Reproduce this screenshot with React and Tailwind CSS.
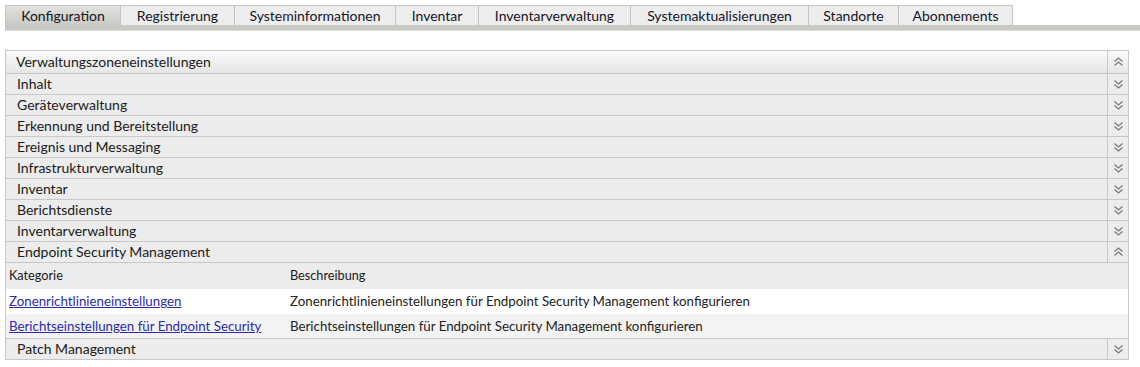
import React from "react";

const font = { fontFamily: "Lato, 'Noto Sans', sans-serif" };

function Chevrons({ up }) {
  return (
    <svg width="11" height="10" viewBox="0 0 11 10" className="block">
      <g fill="none" stroke="#7a7a7a" strokeWidth="1.3">
        {up ? (
          <>
            <path d="M1.5 4.5 L5.5 1 L9.5 4.5" />
            <path d="M1.5 8.5 L5.5 5 L9.5 8.5" />
          </>
        ) : (
          <>
            <path d="M1.5 1.5 L5.5 5 L9.5 1.5" />
            <path d="M1.5 5.5 L5.5 9 L9.5 5.5" />
          </>
        )}
      </g>
    </svg>
  );
}

const tabs = [
  ["Konfiguration", "w-[115px]", true],
  ["Registrierung", "w-[114px]"],
  ["Systeminformationen", "w-[161px]"],
  ["Inventar", "w-[83px]"],
  ["Inventarverwaltung", "w-[152px]"],
  ["Systemaktualisierungen", "w-[178px]"],
  ["Standorte", "w-[90px]"],
  ["Abonnements", "w-[115px] border-r"],
];

function SectionRow({ label, up }) {
  return (
    <div className="flex h-[21px] border-t border-[#c8c8c8] bg-[#ececec]">
      <div className="flex-1 pl-[11px] text-[14px] leading-[20px] text-[#1a1a1a]">{label}</div>
      <div className="w-[21px] border-l border-[#c8c8c8] flex items-center justify-center">
        <Chevrons up={up} />
      </div>
    </div>
  );
}

export default function App() {
  const sections = [
    "Inhalt",
    "Geräteverwaltung",
    "Erkennung und Bereitstellung",
    "Ereignis und Messaging",
    "Infrastrukturverwaltung",
    "Inventar",
    "Berichtsdienste",
    "Inventarverwaltung",
  ];
  return (
    <div className="w-[1140px] h-[367px] bg-white overflow-hidden" style={font}>
      <div className="flex pl-[5px] pt-[5px]">
        {tabs.map(([t, w, sel]) => (
          <div
            key={t}
            className={`${w} h-[20px] border-l border-t border-[#c4c4c4] text-center text-[14px] leading-[19px] text-[#141428] ${
              sel ? "bg-gradient-to-b from-[#e2e2de] to-[#c9c9c5]" : "bg-[#ededed]"
            }`}
          >
            {t}
          </div>
        ))}
      </div>
      <div className="ml-[5px] h-[6px] bg-[#c9c9c6] border-b border-[#dcdcdc]" />
      <div className="ml-[5px] mt-[19px] w-[1124px] border border-[#c8c8c8]">
        <div className="flex h-[22px] bg-gradient-to-b from-[#fafafa] to-[#e6e6e6]">
          <div className="flex-1 pl-[10px] text-[14px] leading-[22px] text-[#1a1a1a]">
            Verwaltungszoneneinstellungen
          </div>
          <div className="w-[21px] border-l border-[#c8c8c8] flex items-center justify-center">
            <Chevrons up />
          </div>
        </div>
        {sections.map((s) => (
          <SectionRow key={s} label={s} />
        ))}
        <SectionRow label="Endpoint Security Management" up />
        <div className="flex h-[27px] border-t border-[#c8c8c8] bg-[#ececec] text-[12.7px] leading-[24px] text-[#1a1a1a]">
          <div className="w-[284px] pl-[3px]">Kategorie</div>
          <div className="flex-1">Beschreibung</div>
        </div>
        <div className="flex h-[25px] bg-white text-[13.3px] leading-[25px] text-[#222]">
          <div className="w-[284px] pl-[3px]">
            <a href="#" className="text-[#2b2bb0] underline">Zonenrichtlinieneinstellungen</a>
          </div>
          <div className="flex-1">Zonenrichtlinieneinstellungen für Endpoint Security Management konfigurieren</div>
        </div>
        <div className="flex h-[24px] bg-[#f3f3f3] text-[13.3px] leading-[24px] text-[#222]">
          <div className="w-[284px] pl-[3px]">
            <a href="#" className="text-[#2b2bb0] underline">Berichtseinstellungen für Endpoint Security</a>
          </div>
          <div className="flex-1">Berichtseinstellungen für Endpoint Security Management konfigurieren</div>
        </div>
        <SectionRow label="Patch Management" />
      </div>
    </div>
  );
}
